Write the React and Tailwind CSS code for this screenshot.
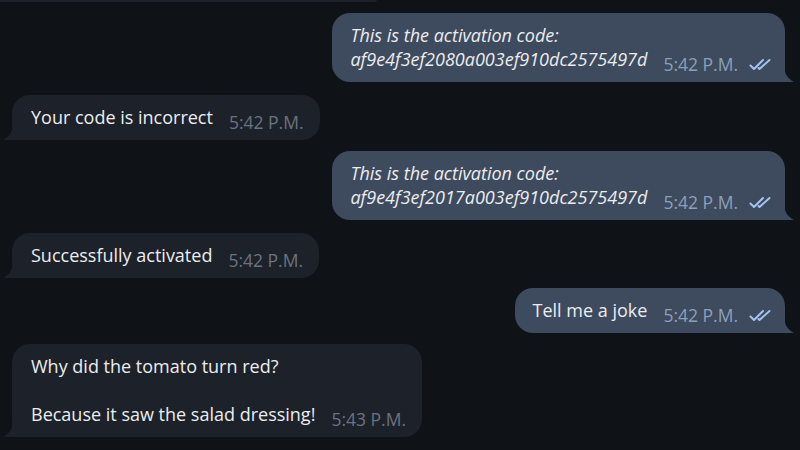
import React from "react";

const messages = [
  { out: true, italic: true, lines: ["This is the activation code:", "af9e4f3ef2080a003ef910dc2575497d"], time: "5:42 P.M." },
  { out: false, lines: ["Your code is incorrect"], time: "5:42 P.M." },
  { out: true, italic: true, lines: ["This is the activation code:", "af9e4f3ef2017a003ef910dc2575497d"], time: "5:42 P.M." },
  { out: false, lines: ["Successfully activated"], time: "5:42 P.M." },
  { out: true, lines: ["Tell me a joke"], time: "5:42 P.M." },
  { out: false, lines: ["Why did the tomato turn red?", "\u00a0", "Because it saw the salad dressing!"], time: "5:43 P.M." },
];

function Checks() {
  return (
    <svg width="23" height="15" viewBox="0 0 23 15" fill="none" stroke="#a3c4ee" strokeWidth="2" strokeLinecap="round" strokeLinejoin="round">
      <path d="M1.5 8.5l3.5 3.5L14 3" />
      <path d="M9.5 11l1 1L20.5 3" />
    </svg>
  );
}

function Tail({ out, color }) {
  if (out) {
    return (
      <svg className="absolute bottom-0 right-[-9px]" width="10" height="18" viewBox="0 0 10 18">
        <path d="M0 0 C0 9 3 14 10 18 L0 18 Z" fill={color} />
      </svg>
    );
  }
  return (
    <svg className="absolute bottom-0 left-[-9px]" width="10" height="18" viewBox="0 0 10 18">
      <path d="M10 0 C10 9 7 14 0 18 L10 18 Z" fill={color} />
    </svg>
  );
}

function Bubble({ m }) {
  const color = m.out ? "#3e4a5d" : "#1d2129";
  return (
    <div className={m.out ? "flex justify-end pr-[15px]" : "flex justify-start pl-[12px]"}>
      <div
        className={
          "relative flex items-end pt-[10px] pb-[11px] " +
          (m.out ? "bg-[#3e4a5d] rounded-[18px] rounded-br-none pl-[18px] pr-[13px]" : "bg-[#1d2129] rounded-[18px] rounded-bl-none pl-[19px] pr-[16px]")
        }
      >
        <div className={"text-[18px] leading-[24px] text-[#ebedf0] " + (m.italic ? "italic" : "")}>
          {m.lines.map((l, i) => (
            <div key={i}>{l}</div>
          ))}
        </div>
        <div className="flex items-center ml-[16px] translate-y-[5px] h-[24px]">
          <span className={"text-[17.5px] " + (m.out ? "text-[#8da0ba]" : "text-[#6b7380]")}>{m.time}</span>
          {m.out && (
            <span className="ml-[11px] flex items-center">
              <Checks />
            </span>
          )}
        </div>
        <Tail out={m.out} color={color} />
      </div>
    </div>
  );
}

export default function App() {
  const gaps = ["mt-[13px]", "mt-[11px]", "mt-[13px]", "mt-[10px]", "mt-[11px]"];
  return (
    <div className="w-[800px] h-[450px] overflow-hidden bg-[#0f1217]" style={{ fontFamily: '"Open Sans", sans-serif' }}>
      <div className="h-[2px] w-[377px] bg-[#1d2129] rounded-br-full" />
      <div className="pt-[11px]">
        {messages.map((m, i) => (
          <div key={i} className={i > 0 ? gaps[i - 1] : ""}>
            <Bubble m={m} />
          </div>
        ))}
      </div>
    </div>
  );
}
